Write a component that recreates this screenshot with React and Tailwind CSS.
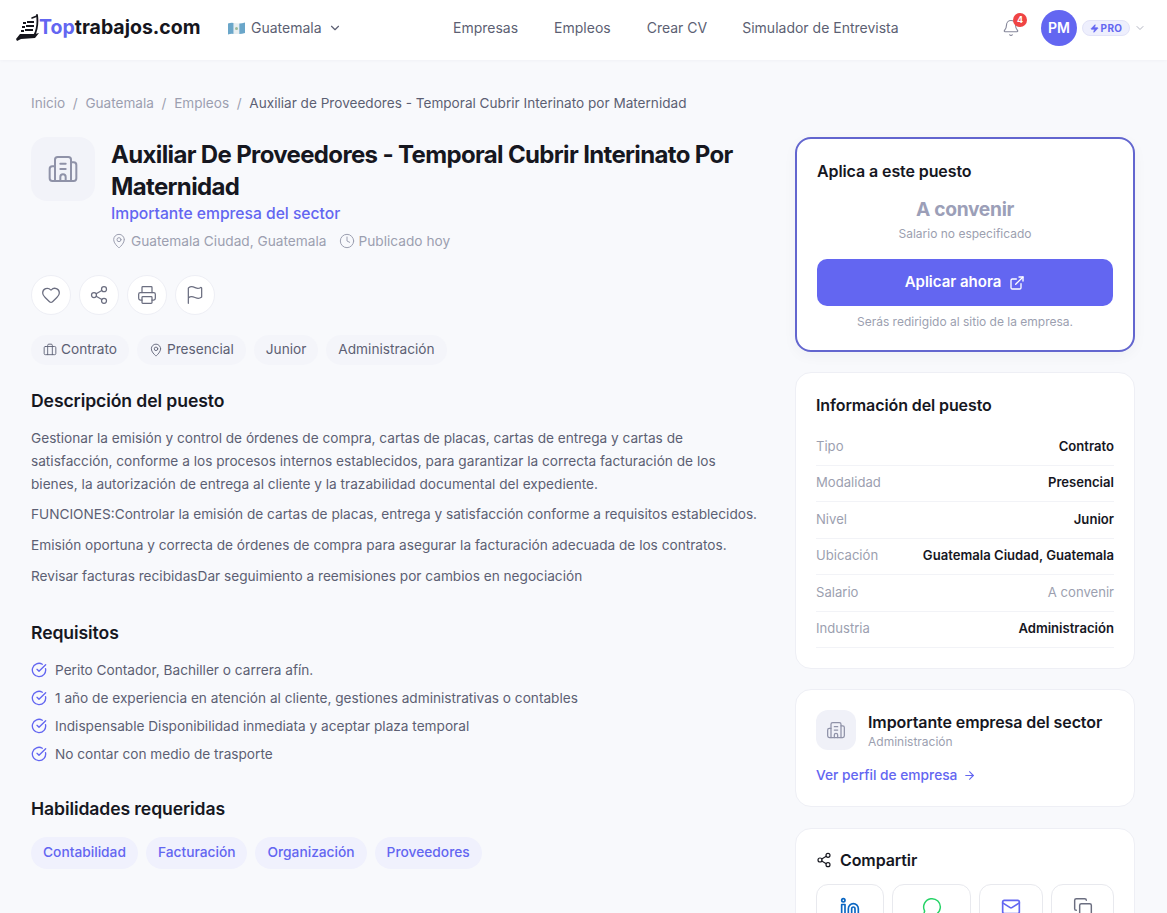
import { Bell, ChevronDown, Zap, Building2, MapPin, Clock, Heart, Share2, Printer, Flag, Briefcase, CircleCheckBig, ExternalLink, ArrowRight, Linkedin, MessageCircle, Mail, Copy } from 'lucide-react';

const infoRows = [
  ['Tipo', 'Contrato'],
  ['Modalidad', 'Presencial'],
  ['Nivel', 'Junior'],
  ['Ubicación', 'Guatemala Ciudad, Guatemala'],
  ['Salario', 'A convenir', true],
  ['Industria', 'Administración'],
];

const requisitos = [
  'Perito Contador, Bachiller o carrera afín.',
  '1 año de experiencia en atención al cliente, gestiones administrativas o contables',
  'Indispensable Disponibilidad inmediata y aceptar plaza temporal',
  'No contar con medio de trasporte',
];

const skills = ['Contabilidad', 'Facturación', 'Organización', 'Proveedores'];

function LogoMark() {
  return (
    <svg width="25" height="28" viewBox="0 0 25 28" className="shrink-0">
      <path d="M22 1 C23 8 22 16 19 22" fill="none" stroke="#16161d" strokeWidth="1.8" strokeLinecap="round" />
      <path d="M17 4 L22 2" stroke="#16161d" strokeWidth="1.6" strokeLinecap="round" />
      <rect x="8" y="8" width="3" height="2" fill="#16161d" />
      <rect x="12" y="7" width="7" height="2" fill="#16161d" />
      <rect x="7" y="12" width="3" height="2" fill="#16161d" />
      <rect x="11" y="11" width="8" height="2" fill="#16161d" />
      <rect x="6" y="16" width="3" height="2" fill="#16161d" />
      <rect x="10" y="15" width="8" height="2" fill="#16161d" />
      <path d="M1 25 L5 20 L20 20 L24 19 L20 24 L6 25 L2 27 Z" fill="#16161d" />
    </svg>
  );
}

function GuatemalaFlag() {
  return (
    <svg width="17" height="13" viewBox="0 0 17 13" className="shrink-0">
      <path d="M0 1.5 Q3 0.5 5.7 1 L5.7 12 Q3 11.5 0 12.5 Z" fill="#6aa6c9" />
      <path d="M5.7 1 L11.3 1.5 L11.3 12 L5.7 12 Z" fill="#e8eef0" />
      <path d="M11.3 1.5 Q14 1.5 17 0.5 L17 11 Q14 12 11.3 12 Z" fill="#6aa6c9" />
      <circle cx="8.5" cy="6.5" r="1.5" fill="#9db99a" />
    </svg>
  );
}

function Header() {
  return (
    <header className="h-[60px] bg-white flex items-center pb-1 shadow-[0_1px_3px_rgba(30,30,80,0.03)]">
      <div className="flex items-center ml-[15px] w-[190px]">
        <LogoMark />
        <span className="text-[19.5px] leading-none font-bold font-['Inter',sans-serif] text-[#16161d] -ml-px">
          <span className="text-[#6366f1]">Top</span>trabajos.com
        </span>
      </div>
      <div className="flex items-center ml-[23px] w-[225px] text-sm text-[#5c5f73]">
        <GuatemalaFlag />
        <span className="ml-[6px]">Guatemala</span>
        <ChevronDown size={14} className="ml-[6px]" />
      </div>
      <nav className="flex gap-9 text-sm text-[#5c5f73]">
        <span>Empresas</span>
        <span>Empleos</span>
        <span>Crear CV</span>
        <span className="-ml-px">Simulador de Entrevista</span>
      </nav>
      <div className="ml-auto flex items-center pr-[21px]">
        <div className="relative mr-[21px]">
          <Bell size={18} strokeWidth={1.5} className="text-[#85879a]" />
          <span className="absolute -top-[6px] -right-[7px] w-[14px] h-[14px] rounded-full bg-[#ef4444] text-white text-[9px] font-bold flex items-center justify-center">4</span>
        </div>
        <div className="w-9 h-9 rounded-full bg-[#6366f1] text-white text-sm font-semibold flex items-center justify-center">PM</div>
        <div className="ml-[5px] h-[16px] w-[48px] rounded-full bg-[#eeeffd] border border-[#e2e3f8] text-[#6366f1] text-[10px] font-bold flex items-center justify-center gap-[2px] tracking-[0.4px]">
          <Zap size={9} fill="currentColor" />
          PRO
        </div>
        <ChevronDown size={12} className="ml-[4px] text-[#b3b5c2]" />
      </div>
    </header>
  );
}

function RoundAction({ Icon }) {
  return (
    <button className="w-10 h-10 rounded-full bg-white border border-[#eeeff5] flex items-center justify-center text-[#6b6e80]">
      <Icon size={20} strokeWidth={1.5} />
    </button>
  );
}

function Tag({ Icon, children }) {
  return (
    <span className="h-[30px] px-3 rounded-full bg-[#f4f5fa] text-[13.65px] text-[#5c5f73] flex items-center gap-1">
      {Icon && <Icon size={14} strokeWidth={1.5} />}
      {children}
    </span>
  );
}

function JobColumn() {
  return (
    <div className="w-[729px] shrink-0">
      <div className="flex gap-4">
        <div className="w-16 h-16 rounded-2xl bg-[#f2f3f9] flex items-center justify-center shrink-0">
          <Building2 size={32} strokeWidth={1.5} className="text-[#8f92a8]" />
        </div>
        <div className="min-w-0 pt-[2px]">
          <h1 className="text-2xl leading-8 font-bold tracking-[-0.65px] text-[#16171f]">Auxiliar De Proveedores - Temporal Cubrir Interinato Por Maternidad</h1>
          <div className="-mt-px text-[15.65px] leading-6 font-medium text-[#6366f1]">Importante empresa del sector</div>
          <div className="mt-[5px] flex items-center text-[13.7px] text-[#9c9fb0]">
            <MapPin size={16} strokeWidth={1.5} className="mr-[4px]" />
            <span>Guatemala Ciudad, Guatemala</span>
            <Clock size={16} strokeWidth={1.5} className="ml-[13px] mr-[3px]" />
            <span>Publicado hoy</span>
          </div>
        </div>
      </div>
      <div className="mt-[23px] flex gap-2">
        <RoundAction Icon={Heart} />
        <RoundAction Icon={Share2} />
        <RoundAction Icon={Printer} />
        <RoundAction Icon={Flag} />
      </div>
      <div className="mt-[20px] flex gap-2">
        <Tag Icon={Briefcase}>Contrato</Tag>
        <Tag Icon={MapPin}>Presencial</Tag>
        <Tag>Junior</Tag>
        <Tag>Administración</Tag>
      </div>

      <h2 className="mt-[22px] text-[17.6px] tracking-[-0.1px] leading-7 font-semibold text-[#16171f]">Descripción del puesto</h2>
      <div className="mt-[12px] text-[13.65px] leading-[23px] text-[#5c5f73]">
        <p>Gestionar la emisión y control de órdenes de compra, cartas de placas, cartas de entrega y cartas de satisfacción, conforme a los procesos internos establecidos, para garantizar la correcta facturación de los bienes, la autorización de entrega al cliente y la trazabilidad documental del expediente.</p>
        <p className="mt-[7px]">FUNCIONES:Controlar la emisión de cartas de placas, entrega y satisfacción conforme a requisitos establecidos.</p>
        <p className="mt-2">Emisión oportuna y correcta de órdenes de compra para asegurar la facturación adecuada de los contratos.</p>
        <p className="mt-2">Revisar facturas recibidasDar seguimiento a reemisiones por cambios en negociación</p>
      </div>

      <h2 className="mt-[31px] text-[17.6px] tracking-[-0.1px] leading-7 font-semibold text-[#16171f]">Requisitos</h2>
      <ul className="mt-[13px] flex flex-col gap-[7px] text-[13.65px] leading-[21px] text-[#5c5f73]">
        {requisitos.map((r) => (
          <li key={r} className="flex items-center gap-2">
            <CircleCheckBig size={16} strokeWidth={2} className="text-[#6366f1] shrink-0" />
            {r}
          </li>
        ))}
      </ul>

      <h2 className="mt-[30px] text-[17.6px] tracking-[-0.1px] leading-7 font-semibold text-[#16171f]">Habilidades requeridas</h2>
      <div className="mt-[14px] flex gap-2">
        {skills.map((s) => (
          <span key={s} className="h-8 px-3 rounded-full bg-[#f0f1fd] text-[13.76px] font-medium text-[#6366f1] flex items-center">{s}</span>
        ))}
      </div>
    </div>
  );
}

function ApplyCard() {
  return (
    <div className="rounded-2xl bg-white border-2 border-[#6366cf] px-5 pt-[20px] pb-[20px] shadow-[0_4px_14px_rgba(30,30,80,0.04)]">
      <div className="text-base tracking-[-0.1px] leading-6 font-semibold text-[#16171f]">Aplica a este puesto</div>
      <div className="mt-[12px] text-center text-[19.2px] tracking-[-0.3px] leading-7 font-bold text-[#9c9fb8]">A convenir</div>
      <div className="mt-[3px] text-center text-xs leading-4 text-[#9c9fb0]">Salario no especificado</div>
      <button className="mt-[17px] w-full h-[47px] rounded-[10px] bg-[#6366f1] text-white text-[15px] font-semibold flex items-center justify-center gap-2">
        Aplicar ahora
        <ExternalLink size={16} />
      </button>
      <div className="mt-[8px] text-center text-xs leading-4 text-[#9c9fb0]">Serás redirigido al sitio de la empresa.</div>
    </div>
  );
}

function InfoCard() {
  return (
    <div className="mt-5 rounded-2xl bg-white border border-[#eeeff5] px-5 pt-[20px] pb-[20px]">
      <div className="text-base tracking-[-0.1px] leading-6 font-semibold text-[#16171f]">Información del puesto</div>
      <div className="mt-[12px]">
        {infoRows.map(([k, v, muted]) => (
          <div key={k} className="h-[36.5px] flex items-center justify-between border-b border-[#f2f3f7] text-[13.1px]">
            <span className="text-[#9c9fb0]">{k}</span>
            <span className={muted ? 'text-[#9c9fb0]' : 'font-semibold text-[#16171f]'}>{v}</span>
          </div>
        ))}
      </div>
    </div>
  );
}

function CompanyCard() {
  return (
    <div className="mt-5 rounded-2xl bg-white border border-[#eeeff5] px-5 pt-[20px] pb-[21px]">
      <div className="flex items-center gap-3">
        <div className="w-10 h-10 rounded-xl bg-[#f0f1f8] flex items-center justify-center">
          <Building2 size={20} strokeWidth={1.5} className="text-[#8f92a8]" />
        </div>
        <div>
          <div className="text-base tracking-[-0.1px] leading-[22px] font-semibold text-[#16171f]">Importante empresa del sector</div>
          <div className="pt-px text-xs leading-4 text-[#9c9fb0]">Administración</div>
        </div>
      </div>
      <div className="mt-[15px] leading-5 flex items-center gap-[6px] text-[13.76px] font-medium text-[#6366f1]">
        Ver perfil de empresa
        <ArrowRight size={13} />
      </div>
    </div>
  );
}

function ShareCard() {
  const btn = 'h-[54px] rounded-xl border border-[#e8e9ee] flex justify-center pt-[12px]';
  return (
    <div className="mt-[21px] rounded-2xl bg-white border border-[#eeeff5] px-5 pt-[19px] pb-[20px]">
      <div className="flex items-center gap-2 text-base tracking-[-0.1px] leading-6 font-semibold text-[#16171f]">
        <Share2 size={16} strokeWidth={1.75} />
        Compartir
      </div>
      <div className="mt-[12px] flex gap-2">
        <div className={`${btn} w-[68px] text-[#0a66c2]`}><Linkedin size={20} strokeWidth={2} /></div>
        <div className={`${btn} w-[79px] text-[#25d366]`}><MessageCircle size={20} strokeWidth={1.75} /></div>
        <div className={`${btn} w-[64px] text-[#6366f1]`}><Mail size={20} strokeWidth={2} /></div>
        <div className={`${btn} w-[63px] text-[#6b6e80]`}><Copy size={20} strokeWidth={1.75} /></div>
      </div>
    </div>
  );
}

export default function App() {
  return (
    <div className="h-[913px] overflow-hidden bg-[#f8f9fc] font-['Inter',sans-serif]">
      <Header />
      <main className="px-[31px] pt-[33px]">
        <nav className="h-5 flex items-center gap-[7.67px] text-[13.6px] text-[#9c9fb0]">
          <span>Inicio</span>
          <span>/</span>
          <span>Guatemala</span>
          <span>/</span>
          <span>Empleos</span>
          <span>/</span>
          <span className="text-[#5c5f73]">Auxiliar de Proveedores - Temporal Cubrir Interinato por Maternidad</span>
        </nav>
        <div className="mt-[24px] flex gap-[35px]">
          <JobColumn />
          <aside className="w-[340px] shrink-0">
            <ApplyCard />
            <InfoCard />
            <CompanyCard />
            <ShareCard />
          </aside>
        </div>
      </main>
    </div>
  );
}
